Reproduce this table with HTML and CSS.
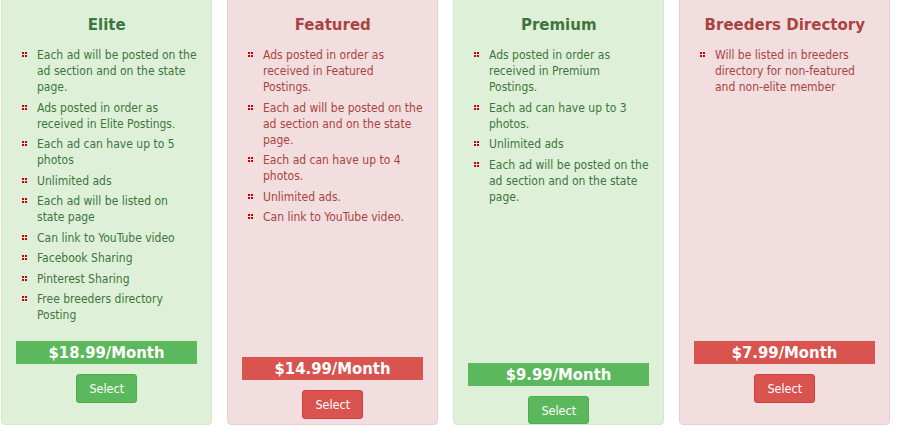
FILE: index.html
```html
<!DOCTYPE html>
<html lang="en">
<head>
<meta charset="utf-8">
<title>Plans</title>
<link rel="stylesheet" href="styles.css">
</head>
<body>
<div class="plans">
  <div class="plan plan-green">
    <h3 class="plan-title">Elite</h3>
    <ul class="plan-list">
      <li>Each ad will be posted on the ad section and on the state page.</li>
      <li>Ads posted in order as received in Elite Postings.</li>
      <li>Each ad can have up to 5 photos</li>
      <li>Unlimited ads</li>
      <li>Each ad will be listed on state page</li>
      <li>Can link to YouTube video</li>
      <li>Facebook Sharing</li>
      <li>Pinterest Sharing</li>
      <li>Free breeders directory Posting</li>
    </ul>
    <div class="plan-price">$18.99/Month</div>
    <button class="btn btn-green">Select</button>
  </div>
  <div class="plan plan-red">
    <h3 class="plan-title">Featured</h3>
    <ul class="plan-list">
      <li>Ads posted in order as received in Featured Postings.</li>
      <li>Each ad will be posted on the ad section and on the state page.</li>
      <li>Each ad can have up to 4 photos.</li>
      <li>Unlimited ads.</li>
      <li>Can link to YouTube video.</li>
    </ul>
    <div class="plan-price price-featured">$14.99/Month</div>
    <button class="btn btn-red">Select</button>
  </div>
  <div class="plan plan-green">
    <h3 class="plan-title">Premium</h3>
    <ul class="plan-list">
      <li>Ads posted in order as received in Premium Postings.</li>
      <li>Each ad can have up to 3 photos.</li>
      <li>Unlimited ads</li>
      <li>Each ad will be posted on the ad section and on the state page.</li>
    </ul>
    <div class="plan-price price-premium">$9.99/Month</div>
    <button class="btn btn-green">Select</button>
  </div>
  <div class="plan plan-red">
    <h3 class="plan-title">Breeders Directory</h3>
    <ul class="plan-list">
      <li>Will be listed in breeders directory for non-featured and non-elite member</li>
    </ul>
    <div class="plan-price">$7.99/Month</div>
    <button class="btn btn-red">Select</button>
  </div>
</div>
</body>
</html>
```

FILE: styles.css
```css
* { box-sizing: border-box; }
html, body { margin: 0; padding: 0; background: #fff; }
body {
  font-family: "DejaVu Sans Condensed", "DejaVu Sans", sans-serif;
  font-size: 12px;
}
.plans {
  display: flex;
  gap: 15px;
  padding-left: 1px;
  margin-top: -5px;
}
.plan {
  width: 211px;
  height: 430px;
  border: 1px solid;
  border-radius: 4px;
  padding: 0 13.5px 0 14px;
  display: flex;
  flex-direction: column;
  align-items: center;
}
.plan-green { background: #dff0d8; border-color: #d6e9c6; color: #3c763d; }
.plan-red { background: #f2dede; border-color: #ebccd1; color: #a94442; }
.plan-title {
  margin: 17px 0 0;
  font-family: "DejaVu Sans", sans-serif;
  font-size: 15px;
  line-height: 24px;
  font-weight: bold;
  text-align: center;
}
.plan-list {
  list-style: none;
  margin: 10px 0 0;
  padding: 0 0 0 6px;
  align-self: stretch;
  min-height: 294px;
}
.plan-list li {
  position: relative;
  line-height: 16px;
  margin-bottom: 4.5px;
  padding-left: 15px;
}
.plan-list li::before {
  content: "";
  position: absolute;
  left: 0;
  top: 5px;
  width: 2px;
  height: 2px;
  background: #cc0000;
  box-shadow: 3px 0 0 #cc0000, 0 3px 0 #cc0000, 3px 3px 0 #cc0000;
}
.plan-price {
  align-self: stretch;
  margin-right: 0.5px;
  height: 23px;
  line-height: 23px;
  color: #fff;
  font-size: 16.5px;
  font-weight: bold;
  text-align: center;
}
.plan-green .plan-price { background: #5cb85c; }
.plan-red .plan-price { background: #d9534f; }
.price-featured { margin-top: 16px; }
.price-premium { margin-top: 22px; }
.btn {
  margin-top: 10px;
  height: 29px;
  padding: 0 12px;
  border: 1px solid;
  border-radius: 3px;
  color: #fff;
  font-family: inherit;
  font-size: 12.5px;
  cursor: pointer;
}
.btn-green { background: #5cb85c; border-color: #4cae4c; }
.btn-red { background: #d9534f; border-color: #d43f3a; }
```
